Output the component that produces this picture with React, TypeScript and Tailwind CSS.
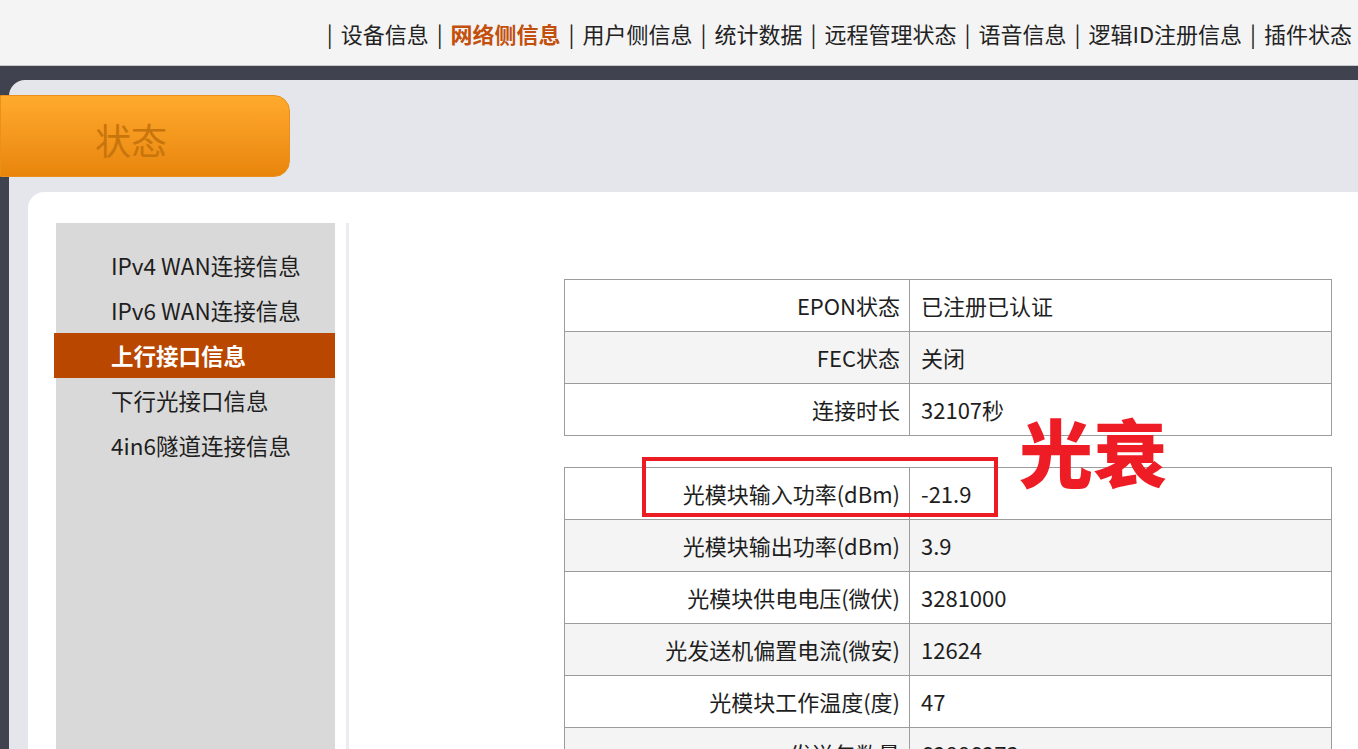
import React from "react";

const navItems = ["设备信息", "网络侧信息", "用户侧信息", "统计数据", "远程管理状态", "语音信息", "逻辑ID注册信息", "插件状态"];
const sideItems = ["IPv4 WAN连接信息", "IPv6 WAN连接信息", "上行接口信息", "下行光接口信息", "4in6隧道连接信息"];

const table1 = [
  ["EPON状态", "已注册已认证"],
  ["FEC状态", "关闭"],
  ["连接时长", "32107秒"],
];
const table2 = [
  ["光模块输入功率(dBm)", "-21.9"],
  ["光模块输出功率(dBm)", "3.9"],
  ["光模块供电电压(微伏)", "3281000"],
  ["光发送机偏置电流(微安)", "12624"],
  ["光模块工作温度(度)", "47"],
  ["发送包数量", "62886273"],
];

function InfoTable({ rows }: { rows: string[][] }) {
  return (
    <table className="w-[768px] border-collapse text-[22px] text-[#1e1e1e]">
      <tbody>
        {rows.map((r, i) => (
          <tr key={i} className={i % 2 === 1 ? "h-[52px] bg-[#f4f4f4]" : "h-[52px] bg-white"}>
            <td className="w-[345px] border border-[#9c9c9c] pr-[9px] text-right">{r[0]}</td>
            <td className="border border-[#9c9c9c] pl-[11px] text-left">{r[1]}</td>
          </tr>
        ))}
      </tbody>
    </table>
  );
}

export default function App() {
  return (
    <div className="h-[749px] w-[1358px] overflow-hidden bg-[#40424f] font-['Noto_Sans_CJK_SC','Noto_Sans',sans-serif]">
      <div className="flex h-[66px] items-center justify-end border-b border-[#c9c9cc] bg-[#f4f4f5] pr-[6px] pt-[2px] text-[22px] text-[#222]">
        {navItems.map((n, i) => (
          <React.Fragment key={n}>
            <span className="mx-[8px]">|</span>
            <span className={i === 1 ? "font-bold text-[#c2500c]" : ""}>{n}</span>
          </React.Fragment>
        ))}
      </div>
      <div className="pl-[9px] pt-[14px]">
        <div className="flex flex-col rounded-tl-[16px] bg-[#e5e6eb] pt-[15px]">
          <div className="-ml-[9px] flex h-[82px] w-[290px] items-center rounded-r-[16px] border border-[#e8901a] bg-gradient-to-b from-[#ffaa2c] to-[#e9850a] pl-[94px] pt-[6px]">
            <span className="text-[36px] text-[#c7750c]">状态</span>
          </div>
          <div className="ml-[19px] mt-[15px] flex h-[600px] rounded-tl-[16px] bg-white pl-[28px] pt-[31px]">
            <div className="flex w-[279px] flex-col bg-[#d9d9d9] pt-[20px] text-[22.5px] text-[#1e1e1e]">
              {sideItems.map((s, i) => (
                <div
                  key={s}
                  className={
                    i === 2
                      ? "-ml-[2px] flex h-[45px] items-center bg-[#b94700] pl-[57px] font-bold text-white"
                      : "flex h-[45px] items-center pl-[55px]"
                  }
                >
                  {s}
                </div>
              ))}
            </div>
            <div className="ml-[11px] w-[3px] bg-[#ebebf0]" />
            <div className="ml-[215px] flex flex-col pt-[56px]">
              <InfoTable rows={table1} />
              <div className="relative mt-[31px]">
                <InfoTable rows={table2} />
                <div className="absolute left-[78px] top-[-10px] h-[60px] w-[356px] border-[4px] border-[#ec1c24]" />
                <div className="absolute left-[455px] top-[-54px] text-[74px] font-black leading-none text-[#ee1c25]">光衰</div>
              </div>
            </div>
          </div>
        </div>
      </div>
    </div>
  );
}
